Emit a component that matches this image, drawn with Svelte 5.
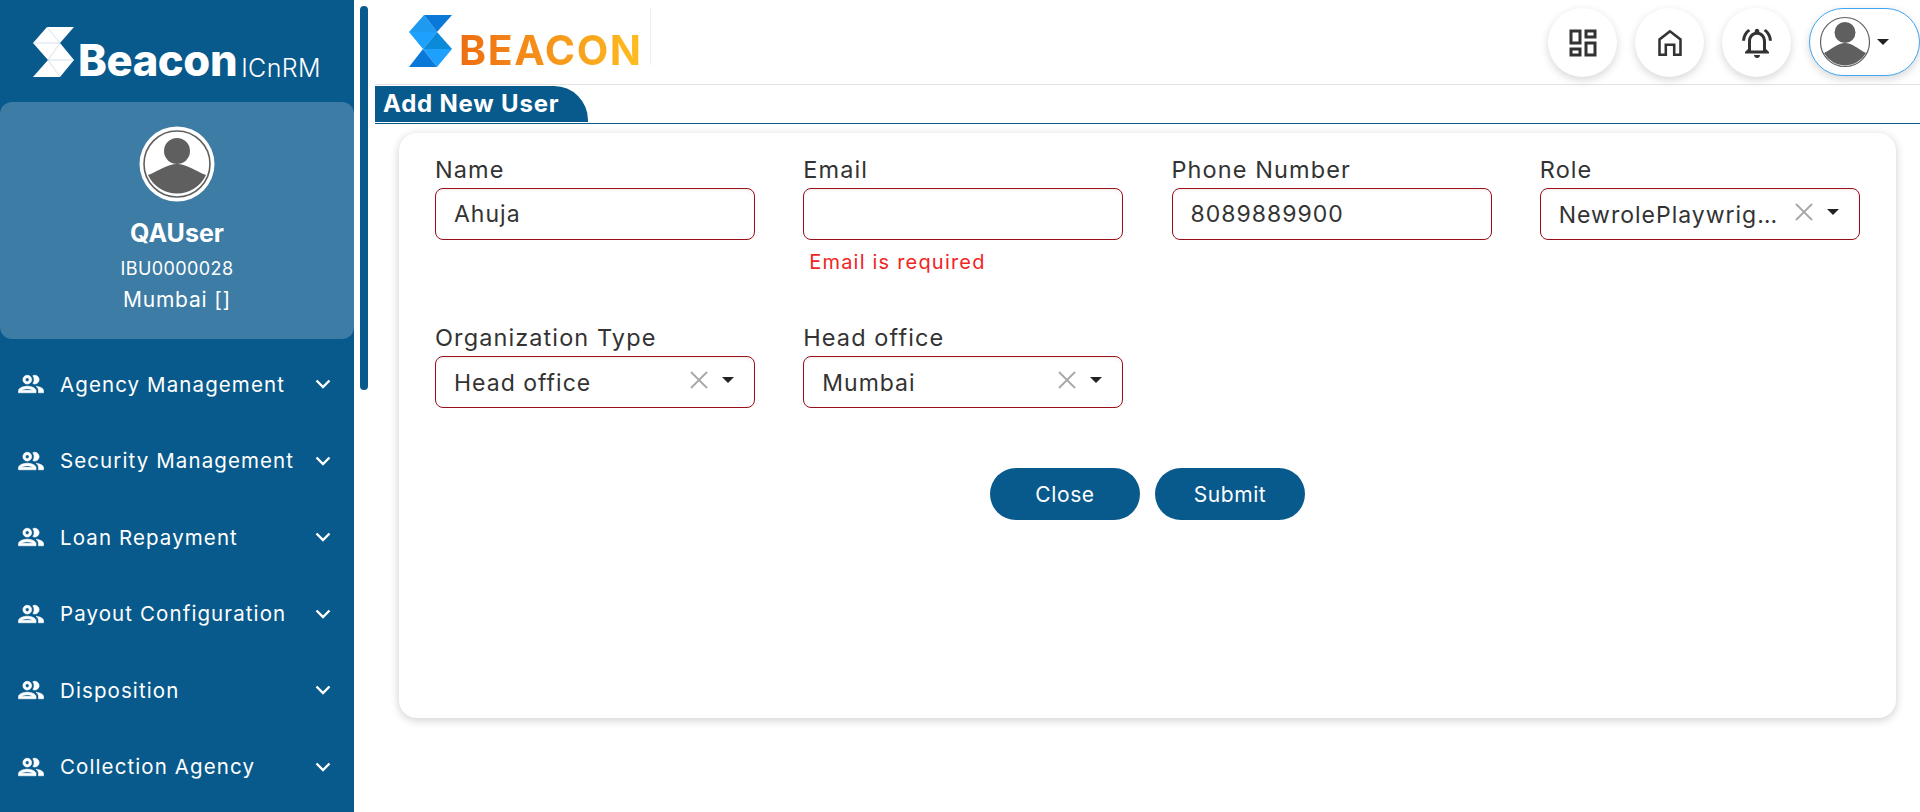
<script>
  const menu = [
    "Agency Management",
    "Security Management",
    "Loan Repayment",
    "Payout Configuration",
    "Disposition",
    "Collection Agency"
  ];
</script>

{#snippet selectBox(text)}
  <div class="select">
    <span class="value">{text}</span>
    <svg class="clear" viewBox="0 0 18 18" width="18" height="18">
      <path d="M1 1L17 17M17 1L1 17" fill="none" stroke="#a8a8a8" stroke-width="1.8" />
    </svg>
    <span class="caret"></span>
  </div>
{/snippet}

<div class="page">
  <aside class="sidebar">
    <div class="brand">
      <svg class="mark" viewBox="0 0 41 50" width="41" height="50">
        <path d="M14 0H41L27 16L41 33L27 50H0L15 33L0 16Z" fill="#fff" />
        <path d="M0 16H27L15 33H41M14 0L27 16M15 33L27 50" fill="none" stroke="#b9cfdd" stroke-width="0.6" />
      </svg>
      <span class="brand-name">Beacon</span>
      <span class="brand-sub">ICnRM</span>
    </div>

    <div class="user-card">
      <svg class="avatar" viewBox="0 0 76 76" width="76" height="76">
        <circle cx="38" cy="38" r="37.5" fill="#fff" />
        <circle cx="38" cy="38" r="33" fill="#fff" stroke="#5f5f5f" stroke-width="1.6" />
        <circle cx="38" cy="25" r="13" fill="#5f5f5f" />
        <path d="M9 49 C20 45 28 38 38 38 C48 38 56 45 67 49 A32 32 0 0 1 9 49Z" fill="#5f5f5f" />
      </svg>
      <div class="user-name">QAUser</div>
      <div class="user-id">IBU0000028</div>
      <div class="user-loc">Mumbai []</div>
    </div>

    <nav class="menu">
      {#each menu as item}
        <div class="menu-item">
          <svg viewBox="0 0 24 24" width="30" height="30" fill="#fff" stroke="#fff" stroke-width="0.5">
            <path d="M9 13.75c-2.34 0-7 1.17-7 3.5V19h14v-1.75c0-2.33-4.66-3.5-7-3.5zM4.34 17c.84-.58 2.87-1.25 4.66-1.25s3.82.67 4.66 1.25H4.34zM9 12c1.93 0 3.5-1.57 3.5-3.5S10.93 5 9 5 5.5 6.57 5.5 8.5 7.07 12 9 12zm0-5c.83 0 1.5.67 1.5 1.5S9.83 10 9 10s-1.5-.67-1.5-1.5S8.17 7 9 7zm7.04 6.81c1.16.84 1.96 1.96 1.96 3.44V19h4v-1.75c0-2.02-3.5-3.17-5.96-3.44zM15 12c1.93 0 3.5-1.57 3.5-3.5S16.93 5 15 5c-.54 0-1.04.13-1.5.35.63.89 1 1.98 1 3.15s-.37 2.26-1 3.15c.46.22.96.35 1.5.35z" />
          </svg>
          <span class="menu-label">{item}</span>
          <svg class="chev" viewBox="0 0 16 10" width="16" height="10">
            <path d="M1.5 1.5L8 8L14.5 1.5" fill="none" stroke="#fff" stroke-width="2.4" />
          </svg>
        </div>
      {/each}
    </nav>
  </aside>

  <div class="scroll-thumb"></div>

  <main class="main">
    <header class="topbar">
      <div class="logo">
        <svg viewBox="0 0 43 52" width="43" height="52">
          <path d="M15 0L28 17H0Z" fill="#1e9bf0" />
          <path d="M15 0H43L28 17Z" fill="#0a78d8" />
          <path d="M0 17H28L14 34Z" fill="#1ea0ff" />
          <path d="M28 17L43 34H14Z" fill="#0a8ad8" />
          <path d="M14 34H43L28 52Z" fill="#1ea0ff" />
          <path d="M14 34L28 52H0Z" fill="#0a78d8" />
        </svg>
        <span class="logo-text">BEACON</span>
      </div>
      <div class="actions">
        <button class="round" aria-label="Dashboard">
          <svg viewBox="0 0 24 24" width="36" height="36" fill="#333">
            <path d="M19 5v2h-4V5h4M9 5v6H5V5h4m10 8v6h-4v-6h4M9 17v2H5v-2h4M21 3h-8v6h8V3zM11 3H3v10h8V3zm10 8h-8v10h8V11zm-10 4H3v6h8v-6z" />
          </svg>
        </button>
        <button class="round" aria-label="Home">
          <svg viewBox="0 0 24 24" width="36" height="36">
            <path d="M12 4.2L5 9.6V19.8H9.2V13.2H14.8V19.8H19V9.6Z" fill="none" stroke="#333" stroke-width="1.7" />
          </svg>
        </button>
        <button class="round" aria-label="Notifications">
          <svg viewBox="0 0 24 24" width="36" height="36" fill="#333">
            <path d="M7.58 4.08L6.15 2.65C3.75 4.48 2.17 7.3 2.03 10.5h2c.15-2.65 1.51-4.97 3.55-6.42zm12.39 6.42h2c-.15-3.2-1.73-6.02-4.12-7.85l-1.42 1.43c2.02 1.45 3.39 3.77 3.54 6.42zM18 11c0-3.07-1.64-5.64-4.5-6.32V4c0-.83-.67-1.5-1.5-1.5s-1.5.67-1.5 1.5v.68C7.63 5.36 6 7.92 6 11v5l-2 2v1h16v-1l-2-2v-5zm-2 6H8v-6c0-2.48 1.51-4.5 4-4.5s4 2.02 4 4.5v6zm-4 5c.14 0 .27-.01.4-.04.65-.14 1.18-.58 1.44-1.18.1-.24.15-.5.15-.78h-4c.01 1.1.9 2 2.01 2z" />
          </svg>
        </button>
        <button class="profile" aria-label="Profile">
          <svg viewBox="0 0 52 52" width="52" height="52">
            <circle cx="26" cy="26" r="24.5" fill="#fff" stroke="#5f5f5f" stroke-width="1.2" />
            <circle cx="26" cy="16.5" r="10.5" fill="#5f5f5f" />
            <path d="M5 37C13 33 19 27 26 27C33 27 39 33 47 37A24 24 0 0 1 5 37Z" fill="#5f5f5f" />
          </svg>
          <span class="caret"></span>
        </button>
      </div>
    </header>

    <div class="tab-row">
      <div class="tab">Add New User</div>
    </div>

    <section class="card">
      <div class="grid">
        <div class="field">
          <label for="name">Name</label>
          <input id="name" value="Ahuja" />
        </div>
        <div class="field">
          <label for="email">Email</label>
          <input id="email" value="" />
          <div class="error">Email is required</div>
        </div>
        <div class="field">
          <label for="phone">Phone Number</label>
          <input id="phone" value="8089889900" />
        </div>
        <div class="field">
          <span class="label">Role</span>
          {@render selectBox("NewrolePlaywrightTest")}
        </div>
        <div class="field">
          <span class="label">Organization Type</span>
          {@render selectBox("Head office")}
        </div>
        <div class="field">
          <span class="label">Head office</span>
          {@render selectBox("Mumbai")}
        </div>
      </div>

      <div class="buttons">
        <button class="btn">Close</button>
        <button class="btn">Submit</button>
      </div>
    </section>
  </main>
</div>

<style>
  :global(body) {
    margin: 0;
    background: #fff;
  }

  .page {
    display: flex;
    height: 812px;
    overflow: hidden;
    font-family: Inter, "Noto Sans", sans-serif;
    color: #333;
  }

  .sidebar {
    width: 354px;
    flex: none;
    background: #085a8c;
    color: #fff;
  }

  .brand {
    height: 102px;
    box-sizing: border-box;
    padding: 27px 0 0 33px;
    display: flex;
    align-items: flex-start;
  }

  .brand-name {
    font-size: 43.5px;
    font-weight: 800;
    line-height: 46px;
    margin: 10px 0 0 4px;
    letter-spacing: -0.4px;
  }

  .brand-sub {
    font-size: 25px;
    font-weight: 300;
    line-height: 30px;
    margin: 26px 0 0 4px;
    letter-spacing: 0.4px;
  }

  .user-card {
    height: 237px;
    box-sizing: border-box;
    background: #3d7ca5;
    border-radius: 12px;
    padding-top: 24px;
    display: flex;
    flex-direction: column;
    align-items: center;
  }

  .user-name {
    font-size: 25px;
    font-weight: 700;
    margin-top: 16px;
    line-height: 30px;
  }

  .user-id {
    font-size: 18px;
    margin-top: 9px;
    line-height: 24px;
    letter-spacing: 0.4px;
  }

  .user-loc {
    font-size: 21px;
    margin-top: 5px;
    line-height: 28px;
    letter-spacing: 0.8px;
  }

  .menu {
    padding-top: 7px;
  }

  .menu-item {
    height: 76.5px;
    display: flex;
    align-items: center;
    padding: 0 23px 0 16px;
  }

  .menu-label {
    flex: 1;
    font-size: 20.5px;
    margin-left: 14px;
    letter-spacing: 1.1px;
    white-space: nowrap;
  }

  .scroll-thumb {
    flex: none;
    width: 8px;
    height: 384px;
    margin: 6px 6px 0 6px;
    border-radius: 4px;
    background: #085a8c;
  }

  .main {
    flex: 1;
    min-width: 0;
    margin-left: 1px;
  }

  .topbar {
    height: 85px;
    box-sizing: border-box;
    border-bottom: 1px solid #e2e2e2;
    display: flex;
    justify-content: space-between;
    padding: 8px 0 0 34px;
  }

  .logo {
    display: flex;
    align-items: flex-start;
    padding-top: 7px;
    height: 50px;
    width: 241px;
    border-right: 1px solid #eee;
    box-sizing: content-box;
  }

  .logo-text {
    font-size: 41px;
    font-weight: 700;
    line-height: 46px;
    margin: 12px 0 0 7px;
    letter-spacing: 1.6px;
    background: linear-gradient(90deg, #ee6c12, #ffbe22);
    -webkit-background-clip: text;
    background-clip: text;
    color: transparent;
  }

  .actions {
    display: flex;
    align-items: flex-start;
    gap: 18px;
  }

  .round {
    width: 69px;
    height: 69px;
    padding: 0;
    border: none;
    border-radius: 50%;
    background: #fff;
    box-shadow: 0 3px 8px rgba(0, 0, 0, 0.16);
    display: flex;
    align-items: center;
    justify-content: center;
  }

  .profile {
    width: 111px;
    height: 68px;
    padding: 0 0 0 9px;
    border: 1px solid #3fa6f2;
    border-radius: 34px;
    background: #fff;
    box-shadow: 0 3px 8px rgba(0, 0, 0, 0.16);
    display: flex;
    align-items: center;
    gap: 6px;
  }

  .caret {
    width: 0;
    height: 0;
    flex: none;
    border-left: 6px solid transparent;
    border-right: 6px solid transparent;
    border-top: 6px solid #222;
  }

  .tab-row {
    height: 38px;
    box-sizing: border-box;
    border-bottom: 1.5px solid #085a8c;
    margin-top: 1px;
  }

  .tab {
    width: 213px;
    height: 36px;
    box-sizing: border-box;
    padding-left: 8px;
    background: #085a8c;
    color: #fff;
    border-radius: 0 34px 0 0;
    font-size: 24px;
    font-weight: 700;
    line-height: 36px;
    letter-spacing: 0.8px;
    white-space: nowrap;
  }

  .card {
    margin: 9px 24px 0 24px;
    height: 585px;
    box-sizing: border-box;
    padding: 20px 36px 0 36px;
    background: #fff;
    border-radius: 18px;
    box-shadow: 0 2px 10px rgba(0, 0, 0, 0.2);
  }

  .grid {
    display: grid;
    grid-template-columns: repeat(4, 320px);
    grid-template-rows: 168px 117px;
    column-gap: 48.25px;
  }

  label,
  .label {
    display: block;
    font-size: 23.5px;
    line-height: 33px;
    padding-bottom: 2px;
    letter-spacing: 1.1px;
    white-space: nowrap;
  }

  input,
  .select {
    display: flex;
    align-items: center;
    width: 320px;
    height: 52px;
    box-sizing: border-box;
    padding: 0 14px 0 18px;
    border: 1.5px solid #9a0f1a;
    border-radius: 8px;
    background: #fff;
    box-shadow: inset 0 2px 3px rgba(0, 0, 0, 0.05);
    font-family: inherit;
    font-size: 23px;
    letter-spacing: 1px;
    color: #333;
    outline: none;
  }

  .value {
    flex: 1;
    min-width: 0;
    padding-top: 2px;
    overflow: hidden;
    white-space: nowrap;
    text-overflow: ellipsis;
  }

  .clear {
    flex: none;
    margin: 0 14px 4px 8px;
  }

  .select .caret {
    margin: 0 6px 4px 0;
    border-left-width: 6px;
    border-right-width: 6px;
  }

  .error {
    margin: 8px 0 0 6px;
    font-size: 20px;
    line-height: 28px;
    letter-spacing: 1.2px;
    color: #f02525;
  }

  .buttons {
    display: flex;
    justify-content: center;
    gap: 15px;
    margin-top: 30px;
  }

  .btn {
    width: 150px;
    height: 52px;
    border: none;
    border-radius: 26px;
    background: #085a8c;
    color: #fff;
    font-family: inherit;
    font-size: 21px;
    letter-spacing: 0.6px;
  }
</style>
